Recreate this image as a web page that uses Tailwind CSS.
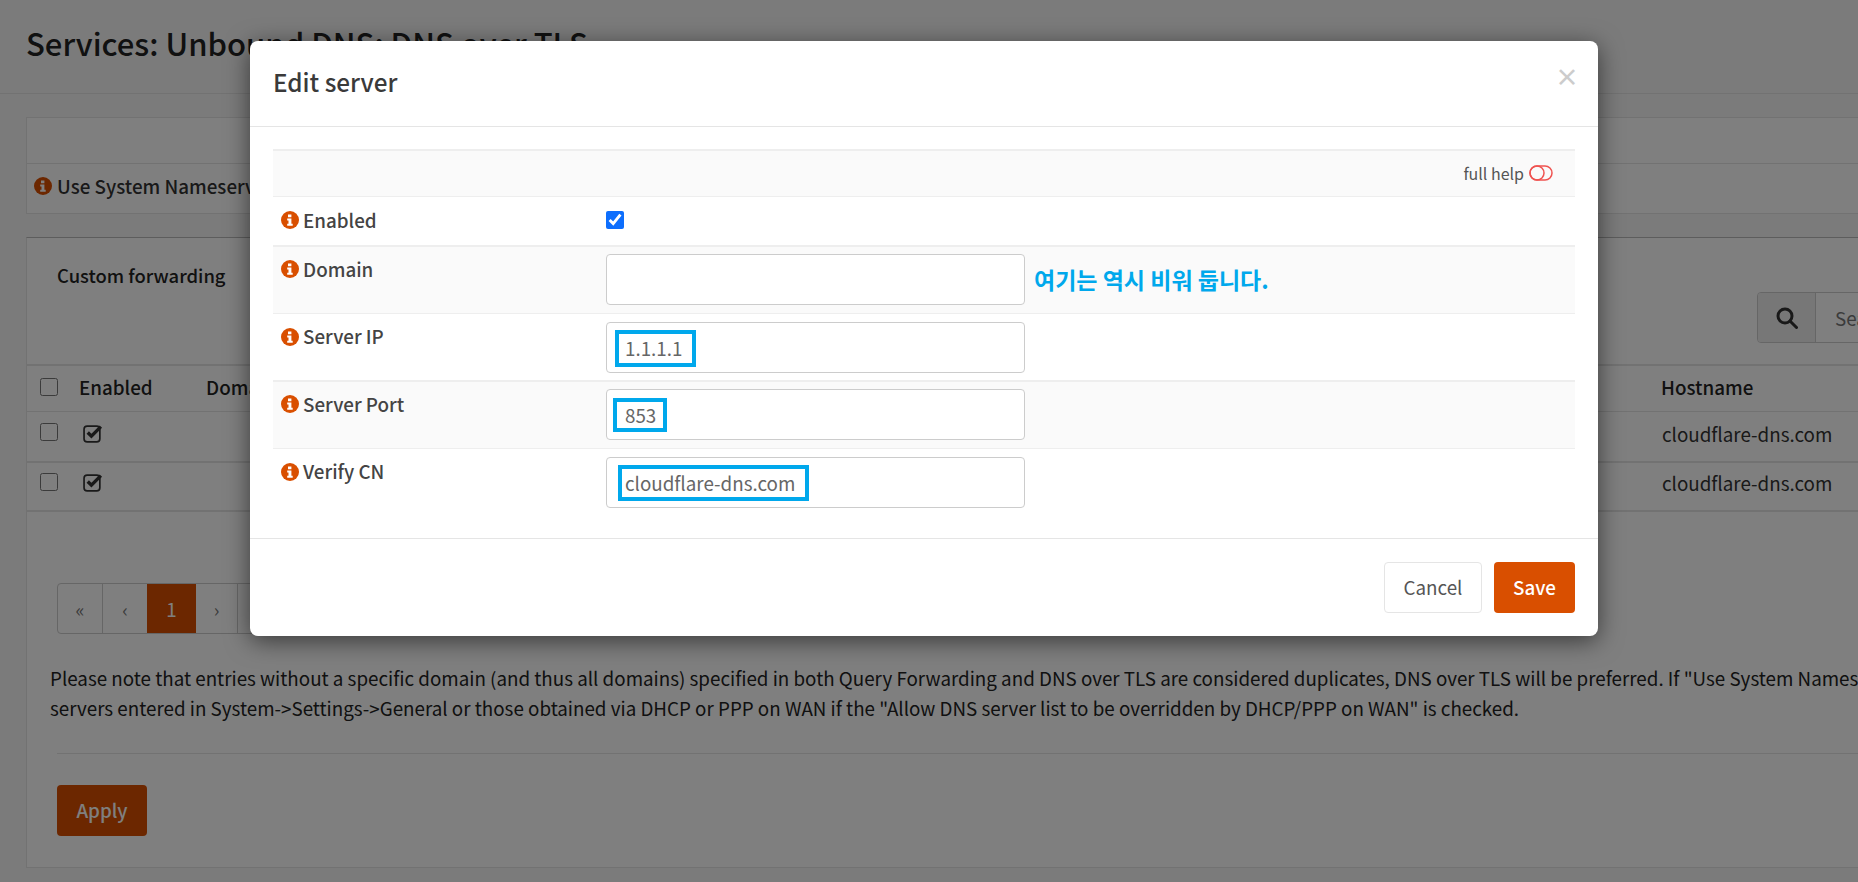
<!DOCTYPE html>
<html lang="en">
<head>
    <meta charset="UTF-8">
    <title>Services: Unbound DNS: DNS over TLS</title>
    <script src="https://cdn.jsdelivr.net/npm/@tailwindcss/browser@4"></script>
</head>
<body class="relative w-[1858px] h-[882px] overflow-hidden bg-[#f7f7f7] text-[#333] text-[18.8px] leading-[26px] [font-family:'Noto_Sans_CJK_KR','Source_Sans_Pro',sans-serif]">

    <!-- page behind the dialog -->
    <header class="h-[94px] border-b border-[#e5e5e5] pl-[26px] pb-[7px] flex items-center bg-[#f7f7f7]">
        <h1 class="text-[31px] leading-[40px] font-medium text-[#222] whitespace-nowrap">Services: Unbound DNS: DNS over TLS</h1>
    </header>

    <main class="w-[1900px] ml-[26px]">
        <section class="mt-[23px] h-[97px] bg-white border border-[#e5e5e5]">
            <div class="h-[46px] border-b border-[#e5e5e5]"></div>
            <div class="h-[44px] pl-[7px] flex items-center gap-[5px] font-medium">
                <svg class="w-[18px] h-[18px]" viewBox="0 0 18 18"><circle cx="9" cy="9" r="9" fill="#d94f00"/><path d="M7 3.500h3.400v2.700H7zM6.200 7.500h4.200v5.200h1.300v2H6.200v-2h1.300V9.500H6.200z" fill="#fff"/></svg>
                <span>Use System Nameservers</span>
            </div>
        </section>

        <section class="mt-[23px] h-[631px] bg-white border border-[#e5e5e5] border-t-[#bbb]">
            <div class="h-[126px] relative">
                <h2 class="absolute left-[30px] top-[24px] font-medium text-[#222] text-[18.4px]">Custom forwarding</h2>
                <div class="absolute left-[1730px] top-[54px] flex h-[51px] w-[200px] border border-[#ccc] rounded-[4px] overflow-hidden">
                    <div class="w-[58px] bg-[#eee] border-r border-[#ccc] flex items-center justify-center">
                        <svg class="w-[22px] h-[22px]" viewBox="0 0 22 22" fill="none" stroke="#333" stroke-width="3"><circle cx="9" cy="9" r="7"/><path d="M14 14l6.500 6.500" stroke-linecap="round"/></svg>
                    </div>
                    <div class="flex-1 pl-[19px] flex items-center text-[#777] bg-white">Search</div>
                </div>
            </div>

            <div class="h-[47px] border-t-2 border-[#e5e5e5] flex items-center font-medium text-[#222]">
                <input type="checkbox" class="w-[18px] h-[18px] ml-[13px] mb-[4px]">
                <span class="ml-[21px] w-[127px] mb-[4px]">Enabled</span>
                <span class="w-[1456px] mb-[4px]">Domain</span>
                <span class="-ml-[1px] mb-[4px]">Hostname</span>
            </div>
            <div class="h-[50px] border-t border-[#e5e5e5] flex items-center">
                <input type="checkbox" class="w-[18px] h-[18px] ml-[13px] mb-[9px]">
                <svg class="ml-[25px] mb-[6px] w-[20px] h-[19px]" viewBox="0 0 19 18" fill="none"><rect x="1" y="2" width="15" height="15" rx="3" stroke="#333" stroke-width="1.600"/><path d="M4.500 8l3.500 3.500L17 2.500" stroke="#333" stroke-width="3.200"/></svg>
                <span class="ml-[1559px] mb-[6px]">cloudflare-dns.com</span>
            </div>
            <div class="h-[49px] border-t-2 border-[#e5e5e5] flex items-center">
                <input type="checkbox" class="w-[18px] h-[18px] ml-[13px] mb-[10px]">
                <svg class="ml-[25px] mb-[8px] w-[20px] h-[19px]" viewBox="0 0 19 18" fill="none"><rect x="1" y="2" width="15" height="15" rx="3" stroke="#333" stroke-width="1.600"/><path d="M4.500 8l3.500 3.500L17 2.500" stroke="#333" stroke-width="3.200"/></svg>
                <span class="ml-[1559px] mb-[8px]">cloudflare-dns.com</span>
            </div>

            <nav class="border-t-2 border-[#e5e5e5] pt-[71px] pl-[30px]">
                <div class="flex h-[51px] w-fit border border-[#ccc] rounded-[4px] text-[#777] overflow-hidden">
                    <span class="w-[45px] border-r border-[#ccc] flex items-center justify-center">«</span>
                    <span class="w-[44px] flex items-center justify-center">‹</span>
                    <span class="w-[49px] bg-[#d94f00] text-white flex items-center justify-center">1</span>
                    <span class="w-[42px] border-r border-[#ccc] flex items-center justify-center">›</span>
                    <span class="w-[45px] flex items-center justify-center">»</span>
                </div>
            </nav>

            <div class="pl-[23px] mt-[29px] leading-[30px] text-[#222] whitespace-nowrap">
                <p>Please note that entries without a specific domain (and thus all domains) specified in both Query Forwarding and DNS over TLS are considered duplicates, DNS over TLS will be preferred. If "Use System Nameservers" is checked, Unbound will use the DNS</p>
                <p>servers entered in System-&gt;Settings-&gt;General or those obtained via DHCP or PPP on WAN if the "Allow DNS server list to be overridden by DHCP/PPP on WAN" is checked.</p>
            </div>

            <div class="ml-[30px] mt-[30px] pt-[31px] border-t border-[#e5e5e5]">
                <button class="w-[90px] h-[51px] pb-[2px] rounded-[4px] bg-[#d94f00] text-white font-medium">Apply</button>
            </div>
        </section>
    </main>

    <!-- backdrop and dialog -->
    <div class="absolute inset-0 bg-black/50"></div>

    <div class="absolute left-[250px] top-[41px] w-[1348px] h-[595px] bg-white rounded-[8px] shadow-[0_5px_25px_rgba(0,0,0,0.55)] flex flex-col text-[#444]">
        <div class="h-[86px] shrink-0 border-b border-[#e5e5e5] pl-[23px] pr-[23px] flex items-center justify-between">
            <h3 class="text-[24.3px] leading-[32px] font-medium text-[#3a3a3a] mb-[3px]">Edit server</h3>
            <button class="text-[24px] leading-[24px] font-bold text-[#ccc] mb-[15px] -mr-[4px]">×</button>
        </div>

        <div class="flex-1 pt-[22px] px-[23px]">
            <div class="h-[47px] bg-[#fafafa] border-t-2 border-[#eee] flex items-center justify-end pr-[22px] gap-[5px] text-[16px] text-[#555]">
                <span class="mb-[2px]">full help</span>
                <svg class="w-[24px] h-[16px] mb-[2px]" viewBox="0 0 24 16" fill="none" stroke="#ef5350" stroke-width="1.500"><rect x="1" y="1" width="22" height="14" rx="7"/><circle cx="8" cy="8" r="7"/></svg>
            </div>

            <div class="h-[49px] border-t border-[#eee] flex">
                <label class="w-[333px] pl-[8px] pt-[14px] flex gap-[4px] font-medium items-start">
                    <svg class="w-[18px] h-[18px]" viewBox="0 0 18 18"><circle cx="9" cy="9" r="9" fill="#d94f00"/><path d="M7 3.500h3.400v2.700H7zM6.200 7.500h4.200v5.200h1.300v2H6.200v-2h1.300V9.500H6.200z" fill="#fff"/></svg>
                    <span class="-mt-[4px]">Enabled</span>
                </label>
                <input type="checkbox" checked class="w-[18px] h-[18px] mt-[14px] accent-[#0d6efd]">
            </div>

            <div class="h-[68px] border-t-2 border-[#eee] bg-[#fafafa] flex">
                <label class="w-[333px] pl-[8px] pt-[13px] flex gap-[4px] font-medium items-start">
                    <svg class="w-[18px] h-[18px]" viewBox="0 0 18 18"><circle cx="9" cy="9" r="9" fill="#d94f00"/><path d="M7 3.500h3.400v2.700H7zM6.200 7.500h4.200v5.200h1.300v2H6.200v-2h1.300V9.500H6.200z" fill="#fff"/></svg>
                    <span class="-mt-[4px]">Domain</span>
                </label>
                <input type="text" class="mt-[7px] w-[419px] h-[51px] bg-white border border-[#ccc] rounded-[4px] pl-[18px]">
                <span class="ml-[9px] mt-[19px] text-[23px] font-bold text-[#00a8ec]">여기는 역시 비워 둡니다.</span>
            </div>

            <div class="h-[67px] border-t border-[#eee] flex">
                <label class="w-[333px] pl-[8px] pt-[14px] flex gap-[4px] font-medium items-start">
                    <svg class="w-[18px] h-[18px]" viewBox="0 0 18 18"><circle cx="9" cy="9" r="9" fill="#d94f00"/><path d="M7 3.500h3.400v2.700H7zM6.200 7.500h4.200v5.200h1.300v2H6.200v-2h1.300V9.500H6.200z" fill="#fff"/></svg>
                    <span class="-mt-[5px]">Server IP</span>
                </label>
                <div class="relative mt-[8px] w-[419px] h-[51px]">
                    <input type="text" value="1.1.1.1" class="w-full h-full bg-white border border-[#ccc] rounded-[4px] pl-[18px] text-[#666]">
                    <div class="absolute left-[9px] top-[8px] w-[81px] h-[37px] border-4 border-[#00a8ec]"></div>
                </div>
            </div>

            <div class="h-[68px] border-t-2 border-[#eee] bg-[#fafafa] flex">
                <label class="w-[333px] pl-[8px] pt-[13px] flex gap-[4px] font-medium items-start">
                    <svg class="w-[18px] h-[18px]" viewBox="0 0 18 18"><circle cx="9" cy="9" r="9" fill="#d94f00"/><path d="M7 3.500h3.400v2.700H7zM6.200 7.500h4.200v5.200h1.300v2H6.200v-2h1.300V9.500H6.200z" fill="#fff"/></svg>
                    <span class="-mt-[4px]">Server Port</span>
                </label>
                <div class="relative mt-[7px] w-[419px] h-[51px]">
                    <input type="text" value="853" class="w-full h-full bg-white border border-[#ccc] rounded-[4px] pl-[18px] text-[#666]">
                    <div class="absolute left-[7px] top-[9px] w-[54px] h-[34px] border-4 border-[#00a8ec]"></div>
                </div>
            </div>

            <div class="h-[68px] border-t border-[#eee] flex">
                <label class="w-[333px] pl-[8px] pt-[14px] flex gap-[4px] font-medium items-start">
                    <svg class="w-[18px] h-[18px]" viewBox="0 0 18 18"><circle cx="9" cy="9" r="9" fill="#d94f00"/><path d="M7 3.500h3.400v2.700H7zM6.200 7.500h4.200v5.200h1.300v2H6.200v-2h1.300V9.500H6.200z" fill="#fff"/></svg>
                    <span class="-mt-[5px]">Verify CN</span>
                </label>
                <div class="relative mt-[8px] w-[419px] h-[51px]">
                    <input type="text" value="cloudflare-dns.com" class="w-full h-full bg-white border border-[#ccc] rounded-[4px] pl-[18px] text-[#666]">
                    <div class="absolute left-[12px] top-[8px] w-[191px] h-[36px] border-4 border-[#00a8ec]"></div>
                </div>
            </div>
        </div>

        <div class="h-[98px] shrink-0 border-t border-[#e5e5e5] pr-[23px] flex items-center justify-end gap-[12px]">
            <button class="w-[98px] h-[51px] pb-[2px] bg-white border border-[#e5e5e5] rounded-[4px] text-[#555]">Cancel</button>
            <button class="w-[81px] h-[51px] pb-[2px] bg-[#d94f00] rounded-[4px] text-white font-medium">Save</button>
        </div>
    </div>
</body>
</html>
